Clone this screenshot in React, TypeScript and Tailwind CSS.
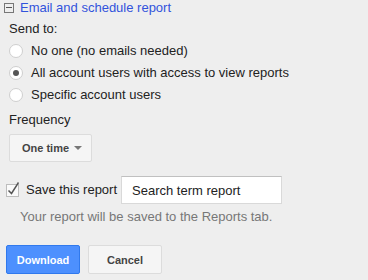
import React from "react";

const Radio = ({ checked }: { checked?: boolean }) => (
  <span className="flex h-[14px] w-[14px] shrink-0 items-center justify-center rounded-full border border-[#cfcfcf] bg-white">
    {checked && <span className="h-[6px] w-[6px] rounded-full bg-[#555]" />}
  </span>
);

const options = [
  { label: "No one (no emails needed)", checked: false },
  { label: "All account users with access to view reports", checked: true },
  { label: "Specific account users", checked: false },
];

const App = () => {
  return (
    <div className="h-[280px] w-[368px] overflow-hidden bg-[#eeeeee] font-['Liberation_Sans',Arial,sans-serif] text-[13px] leading-[16px] text-[#222]">
      <div className="flex h-[16px] items-center pl-[4px]">
        <span className="relative h-[10px] w-[10px] border border-[#777]">
          <span className="absolute left-[1px] right-[1px] top-[3px] h-px bg-[#555]" />
        </span>
        <span className="ml-[6px] text-[#3253dc]">Email and schedule report</span>
      </div>

      <div className="mt-[5px] pl-[9px]">Send to:</div>

      <div className="mt-[3px]">
        {options.map((o) => (
          <div key={o.label} className="flex h-[22px] items-center gap-[8px] pl-[9px]">
            <Radio checked={o.checked} />
            <span>{o.label}</span>
          </div>
        ))}
      </div>

      <div className="mt-[6px] pl-[9px]">Frequency</div>

      <div className="mt-[6px] pl-[9px]">
        <button className="flex h-[28px] w-[83px] items-center rounded-[2px] border border-[#dcdcdc] bg-[#f5f5f5] pl-[12px] text-[11px] font-bold text-[#444]">
          One time
          <svg width="8" height="4" viewBox="0 0 8 4" className="ml-[5px]">
            <path d="M0 0h8L4 4z" fill="#777" />
          </svg>
        </button>
      </div>

      <div className="mt-[14px] flex h-[28px] items-center pl-[6px]">
        <svg width="15" height="16" viewBox="0 0 15 16" className="shrink-0 -mt-[2px]">
          <rect x="0.5" y="3.5" width="12" height="12" fill="#fafafa" stroke="#bdbdbd" />
          <path d="M2.5 9.5l3 3L12.5 1.5" fill="none" stroke="#555" strokeWidth="1.5" />
        </svg>
        <span className="ml-[5px]">Save this report</span>
        <input
          readOnly
          value="Search term report"
          className="ml-[4px] h-[28px] w-[161px] border border-[#d9d9d9] border-t-[#c0c0c0] bg-white px-[10px] text-[13px] text-[#222] outline-none"
        />
      </div>

      <div className="mt-[5px] pl-[20px] text-[#777]">
        Your report will be saved to the Reports tab.
      </div>

      <div className="mt-[20px] flex gap-[8px] pl-[6px]">
        <button className="h-[29px] w-[74px] rounded-[2px] border border-[#3079ed] bg-[#4d90fe] text-[11px] font-bold text-white">
          Download
        </button>
        <button className="h-[29px] w-[74px] rounded-[2px] border border-[#dcdcdc] bg-[#f5f5f5] text-[11px] font-bold text-[#444]">
          Cancel
        </button>
      </div>
    </div>
  );
};

export default App;
